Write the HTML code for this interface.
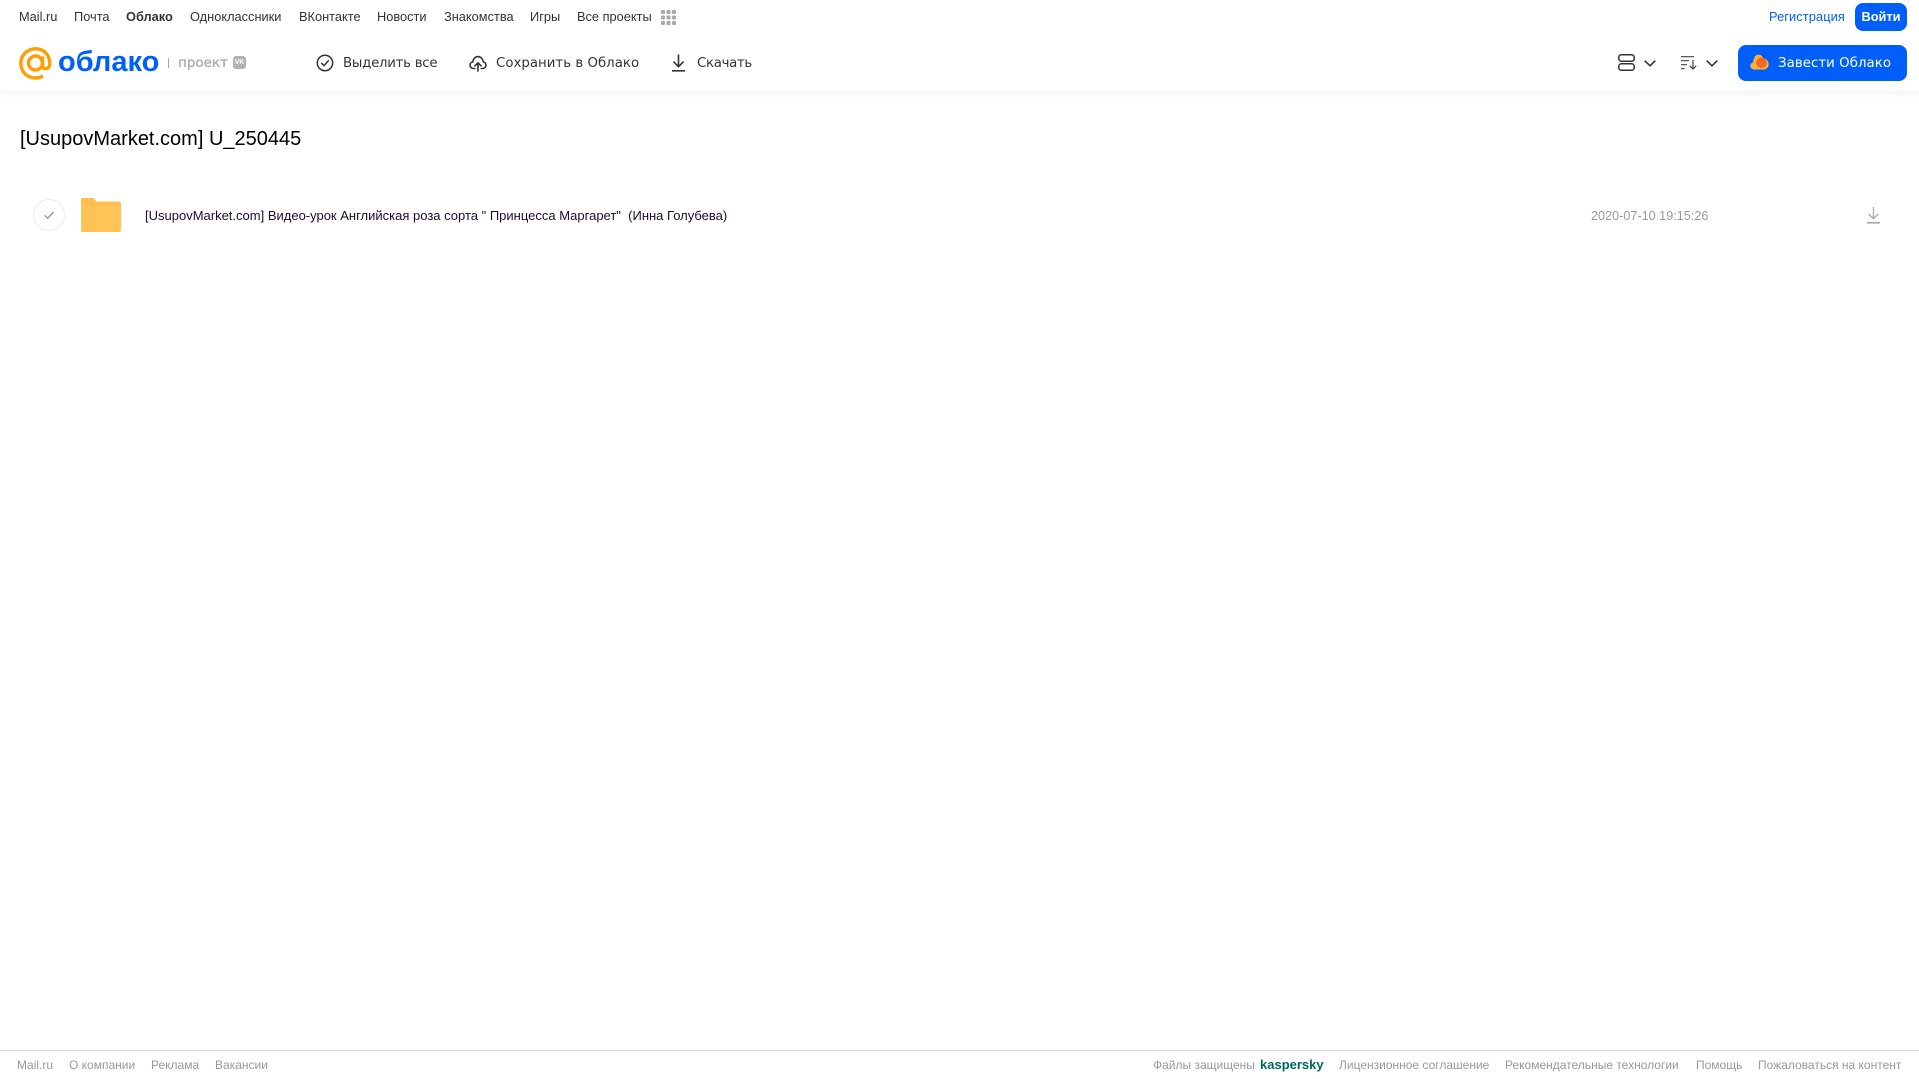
<!DOCTYPE html>
<html lang="ru"><head><meta charset="utf-8"><title>Облако</title>
<style>
html,body{margin:0;padding:0;background:#fff}
body{width:1919px;height:1079px;position:relative;overflow:hidden;font-family:"Liberation Sans",sans-serif}
.t{position:absolute;white-space:nowrap;line-height:20px}
.n{top:7px;font-size:12.8px;color:#333}
.a{top:54px;color:#333;font-family:"DejaVu Sans",sans-serif;font-size:13.3px}
.f{top:1055px;font-size:12px;color:#999}
svg{position:absolute;overflow:visible}
</style></head><body>
<div style="position:absolute;left:0;top:0;width:1919px;height:91px;background:#fff;box-shadow:0 2px 8px rgba(0,0,0,.06)"></div>
<span class="t n" style="left:19px">Mail.ru</span>
<span class="t n" style="left:74px">Почта</span>
<span class="t n" style="left:126px;font-weight:bold">Облако</span>
<span class="t n" style="left:190px">Одноклассники</span>
<span class="t n" style="left:299px">ВКонтакте</span>
<span class="t n" style="left:377px">Новости</span>
<span class="t n" style="left:444px">Знакомства</span>
<span class="t n" style="left:530px">Игры</span>
<span class="t n" style="left:577px">Все проекты</span>
<svg style="left:661px;top:10px" width="15" height="15" fill="#aaa"><rect width="4" height="4" rx="1"/><rect x="5.5" width="4" height="4" rx="1"/><rect x="11" width="4" height="4" rx="1"/><rect y="5.5" width="4" height="4" rx="1"/><rect x="5.5" y="5.500" width="4" height="4" rx="1"/><rect x="11" y="5.5" width="4" height="4" rx="1"/><rect y="11" width="4" height="4" rx="1"/><rect x="5.5" y="11" width="4" height="4" rx="1"/><rect x="11" y="11" width="4" height="4" rx="1"/></svg>
<span class="t n" style="left:1769px;color:#005ff9;letter-spacing:.1px">Регистрация</span>
<div style="position:absolute;left:1855px;top:3px;width:52px;height:28px;border-radius:8px;background:#005ff9;color:#fff;font-size:12.8px;font-weight:bold;line-height:28px;text-align:center">Войти</div>

<svg style="left:19px;top:47px" width="33" height="33" viewBox="0 0 33 33" fill="none" stroke="#ff9e00" stroke-width="3.4"><circle cx="16.5" cy="16" r="7"/><path d="M23.5 9.5V18.5C23.5 23 30.5 23 30.7 17C31 8 25 1.8 16.5 1.8C8 1.8 1.8 8.5 1.8 16.3C1.8 25 8.5 31 16.5 31C19.5 31 22 30.2 24 29"/></svg>
<span class="t" style="left:58px;top:46px;line-height:32px;font-family:'Liberation Sans',sans-serif;font-size:29px;font-weight:bold;color:#005ff9">облако</span>
<div style="position:absolute;left:168px;top:58px;width:1px;height:10px;background:#aaa"></div>
<span class="t" style="left:178px;top:53px;font-family:'DejaVu Sans',sans-serif;font-size:13.5px;color:#aaa;-webkit-text-stroke:.3px #aaa">проект</span>
<div style="position:absolute;left:233px;top:56px;width:13px;height:13px;border-radius:3px;background:#b3b3b3;color:#fff;font-size:7px;font-weight:bold;line-height:13px;text-align:center">VK</div>

<svg style="left:316px;top:54px" width="18" height="18" viewBox="0 0 18 18" fill="none" stroke="#333" stroke-width="1.5"><circle cx="9" cy="9" r="7.7"/><path d="M5.6 9.3L8 11.6L12.4 6.8" stroke-linecap="round" stroke-linejoin="round"/></svg>
<span class="t a" style="left:343px;letter-spacing:-.25px">Выделить все</span>
<svg style="left:469px;top:54px" width="18" height="18" viewBox="0 0 18 18" fill="none" stroke="#333" stroke-width="1.6" stroke-linecap="round" stroke-linejoin="round"><path d="M5.8 14.500H4.600C2.500 14.500 1 13 1 11.200C1 9.500 2.200 8.200 3.700 8C4 5 6.200 2.600 9 2.600C11.800 2.600 14 5 14.300 8C15.800 8.200 17 9.500 17 11.200C17 13 15.500 14.500 13.400 14.500H12.200"/><path d="M9 17V9M5.900 11.800L9 8.800L12.100 11.800"/></svg>
<span class="t a" style="left:496px;letter-spacing:.03px">Сохранить в Облако</span>
<svg style="left:671px;top:54px" width="15" height="18" viewBox="0 0 15 18" fill="none" stroke="#333" stroke-width="1.6"><path d="M7.5 0.5V12.5M2.5 7.7L7.5 12.7L12.5 7.7"/><path d="M1 16.8H14"/></svg>
<span class="t a" style="left:697px;letter-spacing:-.3px">Скачать</span>

<svg style="left:1618px;top:54px" width="17" height="17" viewBox="0 0 17 17" fill="none" stroke="#333" stroke-width="1.5"><rect x=".8" y=".8" width="15.4" height="6.4" rx="2.500"/><rect x=".8" y="9.8" width="15.4" height="6.4" rx="2.500"/></svg>
<svg style="left:1644px;top:60px" width="12" height="7" viewBox="0 0 12 7" fill="none" stroke="#333" stroke-width="1.6"><path d="M.7 .7L6 5.8L11.3 .7"/></svg>
<svg style="left:1681px;top:56px" width="17" height="14" viewBox="0 0 17 14" fill="none" stroke="#444" stroke-width="1.200"><path d="M0 .7H13M0 4.7H8M0 8.7H6M0 12.7H3.500"/><path d="M12 4V13M8.8 9.8L12 13L15.2 9.8"/></svg>
<svg style="left:1706px;top:60px" width="12" height="7" viewBox="0 0 12 7" fill="none" stroke="#333" stroke-width="1.6"><path d="M.7 .7L6 5.8L11.3 .7"/></svg>

<div style="position:absolute;left:1738px;top:45px;width:169px;height:36px;border-radius:8px;background:#005ff9"></div>
<svg style="left:1750px;top:54px" width="19" height="16" viewBox="0 0 19 16"><path d="M4.2 15.5C2 15.5 .3 13.9 .3 11.800C.3 10 1.500 8.600 3.200 8.200C3.600 4 5.200 .6 8.500 .6C11 .6 12.400 2.300 13.300 4.200C16.200 4.600 18.700 7.200 18.700 10.200C18.700 13.200 16.300 15.500 13.300 15.500Z" fill="#ffb03a"/><circle cx="11.500" cy="8.800" r="5.300" fill="#f26a21"/></svg>
<span class="t a" style="left:1778px;color:#fff;letter-spacing:.07px">Завести Облако</span>

<span class="t" style="left:20px;top:126.500px;line-height:24px;font-size:20px;color:#000">[UsupovMarket.com] U_250445</span>

<svg style="left:33px;top:199px" width="32" height="32" viewBox="0 0 32 32" fill="none"><circle cx="16" cy="16" r="15.500" stroke="#ececec"/><path d="M11.700 16.300L14.800 19.200L20.400 13" stroke="#999" stroke-width="1.400"/></svg>
<svg style="left:81px;top:198px" width="40" height="34" viewBox="0 0 40 34"><path d="M2 0H11C13 0 14 1 15 3.500H38C39.200 3.500 40 4.300 40 5.500V32C40 33.200 39.200 34 38 34H2C.8 34 0 33.200 0 32V2C0 .8.800 0 2 0Z" fill="#ffbe4d"/><rect y="8" width="40" height="26" rx="2" fill="#ffc455"/></svg>
<span class="t" style="left:145px;top:206px;font-size:13px;color:#200a30;white-space:pre">[UsupovMarket.com] Видео-урок Английская роза сорта " Принцесса Маргарет"  (Инна Голубева)</span>
<span class="t" style="left:1591px;top:206px;font-size:12.650px;color:#999">2020-07-10 19:15:26</span>
<svg style="left:1867px;top:207px" width="13" height="17" viewBox="0 0 13 17" fill="none" stroke="#aaa" stroke-width="1.300"><path d="M6.500 0V11.500M1.700 7L6.500 11.700L11.300 7"/><path d="M0 15.800H13" stroke-width="1.600"/></svg>

<div style="position:absolute;left:0;top:1050px;width:1919px;height:1px;background:#d9d9d9"></div>
<span class="t f" style="left:17px">Mail.ru</span>
<span class="t f" style="left:69px">О компании</span>
<span class="t f" style="left:151px">Реклама</span>
<span class="t f" style="left:215px">Вакансии</span>
<span class="t f" style="left:1153px">Файлы защищены</span>
<span class="t f" style="left:1260px;color:#00695c;font-weight:bold;font-size:13px">kaspersky</span>
<span class="t f" style="left:1339px">Лицензионное соглашение</span>
<span class="t f" style="left:1505px">Рекомендательные технологии</span>
<span class="t f" style="left:1696px">Помощь</span>
<span class="t f" style="left:1758px">Пожаловаться на контент</span>
</body></html>
